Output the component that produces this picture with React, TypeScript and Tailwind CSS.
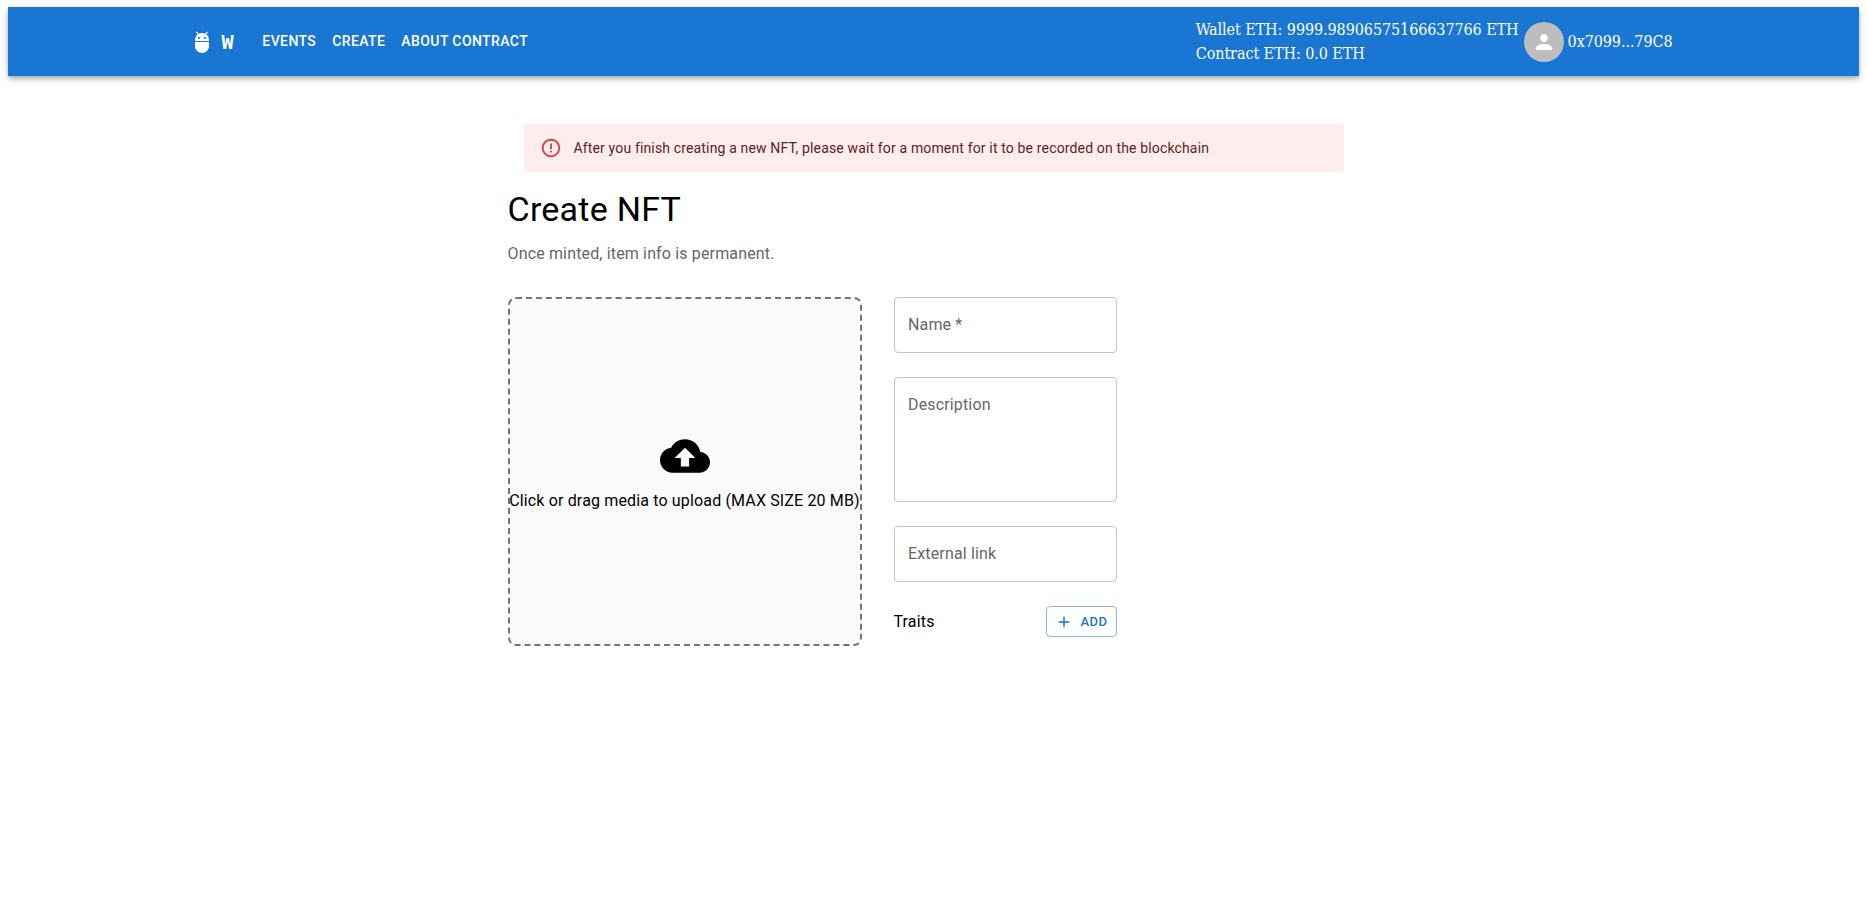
import React from 'react'

const ADB = 'M5 16c0 3.87 3.13 7 7 7s7-3.13 7-7v-4H5v4zM16.12 4.37l2.1-2.1-.82-.83-2.3 2.31C14.16 3.28 13.1 3 12 3s-2.16.28-3.09.75L6.6 1.44l-.82.83 2.1 2.1C6.14 5.64 5 7.68 5 10v1h14v-1c0-2.32-1.14-4.36-2.88-5.63zM9 9c-.55 0-1-.45-1-1s.45-1 1-1 1 .45 1 1-.45 1-1 1zm6 0c-.55 0-1-.45-1-1s.45-1 1-1 1 .45 1 1-.45 1-1 1z'
const PERSON = 'M12 12c2.21 0 4-1.79 4-4s-1.79-4-4-4-4 1.79-4 4 1.79 4 4 4zm0 2c-2.67 0-8 1.34-8 4v2h16v-2c0-2.66-5.33-4-8-4z'
const CLOUD = 'M19.35 10.04C18.67 6.59 15.64 4 12 4 9.11 4 6.6 5.64 5.35 8.04 2.34 8.36 0 10.91 0 14c0 3.31 2.69 6 6 6h13c2.76 0 5-2.24 5-5 0-2.64-2.05-4.78-4.65-4.96zM14 13v4h-4v-4H7l5-5 5 5h-3z'
const ERROR = 'M11 15h2v2h-2zm0-8h2v6h-2zm.99-5C6.47 2 2 6.48 2 12s4.47 10 9.99 10C17.52 22 22 17.52 22 12S17.52 2 11.99 2zM12 20c-4.42 0-8-3.58-8-8s3.58-8 8-8 8 3.58 8 8-3.58 8-8 8z'
const PLUS = 'M19 13h-6v6h-2v-6H5v-2h6V5h2v6h6v2z'

const navItems = ['Events', 'Create', 'About Contract']

function Icon({ d, className }: { d: string; className?: string }) {
  return (
    <svg viewBox="0 0 24 24" fill="currentColor" className={className}>
      <path d={d} />
    </svg>
  )
}

function Header() {
  return (
    <header className="bg-[#1976d2] text-white shadow-[0_2px_4px_-1px_rgba(0,0,0,0.2),0_4px_5px_0_rgba(0,0,0,0.14),0_1px_10px_0_rgba(0,0,0,0.12)]">
      <div className="mx-auto flex h-[69px] w-[1536px] items-center px-6">
        <Icon d={ADB} className="mr-2 h-6 w-6 shrink-0" />
        <span className="mr-4 text-[20px] font-bold tracking-[4.8px] font-['DejaVu_Sans_Mono',monospace]">W</span>
        <nav className="flex flex-1 items-center pb-px">
          {navItems.map((item) => (
            <button key={item} className="px-2 py-1.5 text-[14px] font-medium uppercase leading-[24px] tracking-[0.4px] text-white">
              {item}
            </button>
          ))}
        </nav>
        <div className="flex items-center font-['DejaVu_Serif_Condensed','Liberation_Serif',serif] text-[16px] leading-[24px] tracking-[-0.09px]">
          <div className="pt-px">
            <div>Wallet ETH: 9999.98906575166637766 ETH</div>
            <div>Contract ETH: 0.0 ETH</div>
          </div>
          <div className="ml-[5px] flex h-10 w-10 items-center justify-center rounded-full bg-[#bdbdbd]">
            <Icon d={PERSON} className="h-6 w-6" />
          </div>
          <span className="ml-[4px] mr-[5px] pt-px">0x7099...79C8</span>
        </div>
      </div>
    </header>
  )
}

function Field({ label }: { label: string }) {
  return (
    <input
      placeholder={label}
      className="h-14 w-full rounded border border-[#c4c4c4] px-[13.5px] pb-[2px] text-[16px] tracking-[0.15px] text-black outline-none placeholder:text-[#666666]"
    />
  )
}

export default function App() {
  return (
    <div className="min-h-[921px] bg-white px-2 pt-[7px] font-['Roboto',sans-serif]">
      <Header />
      <main className="mx-auto mt-12 w-[852px]">
        <div className="mx-4 flex h-12 items-center rounded bg-[#fdeded] px-4 text-[14px] tracking-[0.15px] text-[#5f2120]">
          <Icon d={ERROR} className="mr-3 h-[22px] w-[22px] text-[#d32f2f] opacity-90" />
          <span>After you finish creating a new NFT, please wait for a moment for it to be recorded on the blockchain</span>
        </div>

        <h1 className="mt-4 text-[34px] font-normal leading-[42px] tracking-[0.25px] text-black">Create NFT</h1>
        <p className="mt-3 text-[16px] leading-[24px] tracking-[0.15px] text-[#666666]">Once minted, item info is permanent.</p>

        <div className="mt-[31px] flex items-start gap-8">
          <div className="flex h-[349px] w-[354px] flex-col items-center justify-center rounded-lg border-2 border-dashed border-[#757575] bg-[#fafafa] text-black">
            <Icon d={CLOUD} className="mb-[8px] h-[50px] w-[50px]" />
            <span className="whitespace-nowrap text-[16px] leading-[24px] tracking-[0.15px]">Click or drag media to upload (MAX SIZE 20 MB)</span>
          </div>

          <form className="flex w-[223px] flex-col gap-6">
            <Field label="Name *" />
            <textarea
              placeholder="Description"
              className="h-[125px] w-full resize-none rounded border border-[#c4c4c4] px-[13.5px] py-[15px] text-[16px] leading-[23px] tracking-[0.15px] text-black outline-none placeholder:text-[#666666]"
            />
            <Field label="External link" />
            <div className="flex items-center justify-between">
              <span className="text-[16px] leading-[24px] tracking-[0.15px] text-black">Traits</span>
              <button type="button" className="flex h-[31px] w-[71px] items-center justify-center rounded border border-[#1976d2]/50 text-[13px] font-medium uppercase tracking-[0.46px] text-[#1976d2]">
                <Icon d={PLUS} className="mr-2 h-[18px] w-[18px]" />
                Add
              </button>
            </div>
          </form>
        </div>
      </main>
    </div>
  )
}
